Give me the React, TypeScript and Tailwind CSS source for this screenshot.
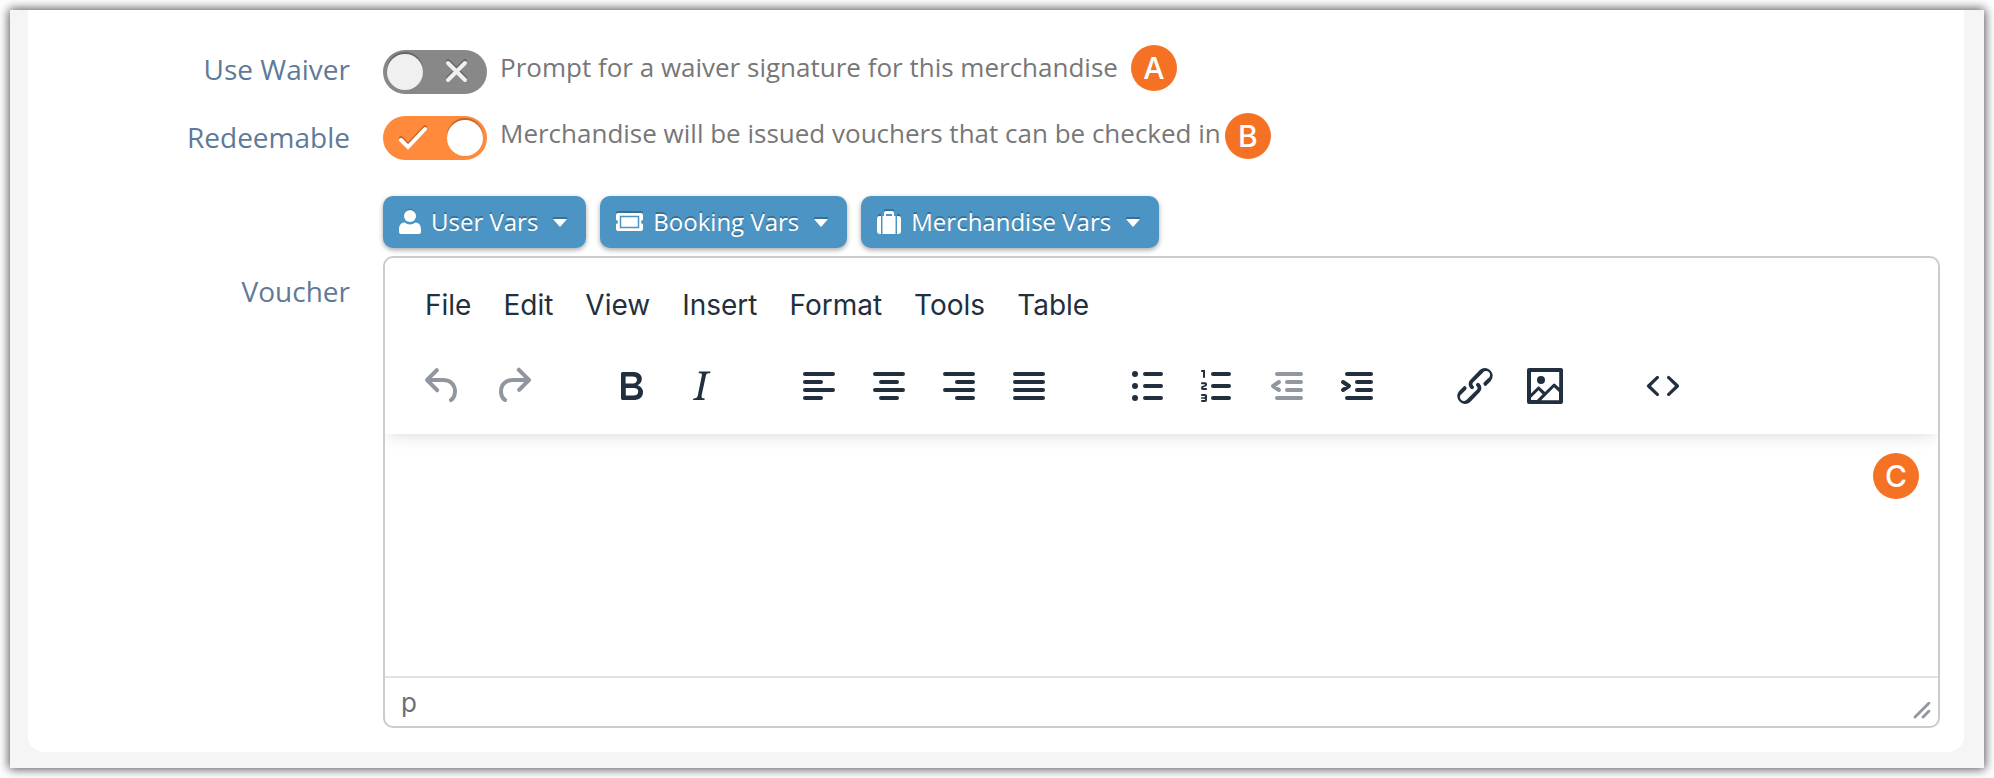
import { useState } from 'react';
import type { ReactNode } from 'react';

const MENUS = ['File', 'Edit', 'View', 'Insert', 'Format', 'Tools', 'Table'];

const UNDO = 'M6.4 8H12c3.7 0 6.2 2 6.8 5.1.6 2.7-.4 5.6-2.3 6.8a1 1 0 01-1-1.8c1.1-.6 1.8-2.7 1.4-4.6-.5-2.1-2.1-3.5-4.9-3.5H6.4l3.3 3.3a1 1 0 11-1.4 1.4l-5-5a1 1 0 010-1.4l5-5a1 1 0 011.4 1.4L6.4 8z';
const REDO = 'M17.6 10H12c-2.8 0-4.4 1.4-4.9 3.5-.4 2 .3 4 1.4 4.6a1 1 0 11-1 1.8c-2-1.2-2.9-4.1-2.3-6.8.6-3 3-5.1 6.8-5.1h5.6l-3.3-3.3a1 1 0 111.4-1.4l5 5a1 1 0 010 1.4l-5 5a1 1 0 01-1.4-1.4l3.3-3.3z';
const BOLD = 'M7.8 19c-.3 0-.5 0-.6-.2l-.2-.5V5.7c0-.2 0-.4.2-.5l.6-.2h5c1.5 0 2.7.3 3.5 1 .7.6 1.1 1.4 1.1 2.5a3 3 0 01-.6 1.9c-.4.6-1 1-1.6 1.2.4.1.9.3 1.3.6s.8.7 1 1.2c.4.4.5 1 .5 1.6 0 1.3-.4 2.3-1.3 3-.8.7-2.1 1-3.8 1H7.8zm5-8.3c.6 0 1.2-.1 1.6-.5.4-.3.6-.7.6-1.3 0-1.1-.8-1.7-2.3-1.7H9.3v3.5h3.4zm.5 6c.7 0 1.3-.1 1.7-.4.4-.4.6-.9.6-1.5s-.2-1-.7-1.4c-.4-.3-1-.4-2-.4H9.4v3.8h4z';
const ITALIC = 'M16.7 4.7l-.1.9h-.3c-.6 0-1 0-1.4.3-.3.3-.4.6-.5 1.1l-2.1 9.8v.6c0 .5.4.8 1.4.8h.2l-.2.8H8l.2-.8h.2c1.1 0 1.8-.5 2-1.5l2-9.8.1-.5c0-.6-.4-.8-1.4-.8h-.3l.2-.9h5.8z';
const DIGITS = 'M6 4v3.5c0 .3-.2.5-.5.5a.5.5 0 01-.5-.5V5h-.5a.5.5 0 010-1H6zm-1 8.8l.2.2h1.3c.3 0 .5.2.5.5s-.2.5-.5.5H4.9a1 1 0 01-.9-1V13c0-.4.3-.8.6-1l1.2-.4.2-.3a.2.2 0 00-.2-.2H4.5a.5.5 0 01-.5-.5c0-.3.2-.5.5-.5h1.6c.5 0 .9.4.9 1v.1c0 .4-.3.8-.6 1l-1.2.4-.2.3zM7 17v2c0 .6-.4 1-1 1H4.5a.5.5 0 010-1h1.2c.2 0 .3-.1.3-.3 0-.2-.1-.3-.3-.3H4.4a.4.4 0 110-.8h1.3c.2 0 .3-.1.3-.3 0-.2-.1-.3-.3-.3H4.5a.5.5 0 110-1H6c.6 0 1 .4 1 1z';
const LINK = 'M6.2 12.3a1 1 0 011.4 1.4l-2 2a2 2 0 102.6 2.8l4.8-4.8a1 1 0 000-1.4 1 1 0 111.4-1.3 2.9 2.9 0 010 4L9.6 20a3.9 3.9 0 01-5.5-5.5l2-2zm11.6-.6a1 1 0 01-1.4-1.4l2-2a2 2 0 10-2.6-2.8L11 10.3a1 1 0 000 1.4A1 1 0 119.6 13a2.9 2.9 0 010-4L14.4 4a3.9 3.9 0 015.5 5.5l-2 2z';
const IMAGE = 'M5 15.7l3.3-3.2c.3-.3.7-.3 1 0L12 15l4.1-4c.3-.4.8-.4 1 0l2 1.9V5H5v10.7zM5 18V19h3l2.8-2.9-2-2L5 17.9zm14-3l-2.5-2.4-6.4 6.5H19v-4zM4 3h16c.6 0 1 .4 1 1v16c0 .6-.4 1-1 1H4a1 1 0 01-1-1V4c0-.6.4-1 1-1zm6 8a2 2 0 100-4 2 2 0 000 4z';
const CODE = 'M9.8 15.7c.3.3.3.8 0 1-.3.4-.9.4-1.2 0l-4.4-4.1a.8.8 0 010-1.2l4.4-4.2c.3-.3.9-.3 1.2 0 .3.3.3.8 0 1.1L6 12l3.8 3.7zM14.2 15.7c-.3.3-.3.8 0 1 .4.4.9.4 1.2 0l4.4-4.1c.3-.3.3-.8 0-1.2l-4.4-4.2a.8.8 0 00-1.2 0c-.3.3-.3.8 0 1.1L18 12l-3.8 3.7z';

const fill = (d: string) => <path d={d} fill="currentColor" fillRule="evenodd" />;
const lines = (d: string) => <path d={d} stroke="currentColor" strokeWidth="2" strokeLinecap="round" strokeLinejoin="round" />;

type Tool = { label: string; icon: ReactNode; disabled?: boolean };

const TOOL_GROUPS: Tool[][] = [
  [
    { label: 'Undo', icon: fill(UNDO), disabled: true },
    { label: 'Redo', icon: fill(REDO), disabled: true },
  ],
  [
    { label: 'Bold', icon: fill(BOLD) },
    { label: 'Italic', icon: fill(ITALIC) },
  ],
  [
    { label: 'Align left', icon: lines('M5 6h14M5 10h8M5 14h14M5 18h8') },
    { label: 'Align center', icon: lines('M5 6h14M8 10h8M5 14h14M8 18h8') },
    { label: 'Align right', icon: lines('M5 6h14M11 10h8M5 14h14M11 18h8') },
    { label: 'Justify', icon: lines('M5 6h14M5 10h14M5 14h14M5 18h14') },
  ],
  [
    {
      label: 'Bullet list',
      icon: (
        <>
          {lines('M11 6h8M11 12h8M11 18h8')}
          <g fill="currentColor">
            <circle cx="6" cy="6" r="1.5" />
            <circle cx="6" cy="12" r="1.5" />
            <circle cx="6" cy="18" r="1.5" />
          </g>
        </>
      ),
    },
    { label: 'Numbered list', icon: <>{lines('M10 6h8M10 12h8M10 18h8')}{fill(DIGITS)}</> },
    { label: 'Decrease indent', icon: lines('M7 6h12M12 10h7M12 14h7M7 18h12M8 10l-3 2 3 2'), disabled: true },
    { label: 'Increase indent', icon: lines('M7 6h12M12 10h7M12 14h7M7 18h12M5 10l3 2-3 2') },
  ],
  [
    { label: 'Insert link', icon: fill(LINK) },
    { label: 'Insert image', icon: fill(IMAGE) },
  ],
  [{ label: 'Source code', icon: fill(CODE) }],
];

function Marker({ children, className = '' }: { children: string; className?: string }) {
  return (
    <span className={`flex size-[46px] shrink-0 items-center justify-center rounded-full bg-[#f57224] font-['Inter',sans-serif] text-[30px] leading-none font-medium text-white ${className}`}>
      {children}
    </span>
  );
}

function Toggle({ id, checked, onChange }: { id: string; checked: boolean; onChange: (v: boolean) => void }) {
  return (
    <span className={`relative flex h-11 w-[104px] shrink-0 items-center rounded-full px-1 ${checked ? 'bg-[#ff8a3c]' : 'bg-[#888888]'}`}>
      <input
        id={id}
        type="checkbox"
        checked={checked}
        onChange={(e) => onChange(e.target.checked)}
        className="absolute inset-0 size-full cursor-pointer opacity-0"
      />
      {checked ? (
        <svg viewBox="0 0 104 44" fill="none" className="pointer-events-none absolute inset-0 size-full" aria-hidden="true">
          <path d="M18 22l7 7 17-18" stroke="#000" strokeOpacity=".25" strokeWidth="4" strokeLinecap="round" />
          <path d="M18 24l7 7 17-18" stroke="#fff" strokeWidth="4" strokeLinecap="round" />
        </svg>
      ) : (
        <svg viewBox="0 0 104 44" fill="none" className="pointer-events-none absolute inset-0 size-full" aria-hidden="true">
          <path d="M65 11l17 17M82 11L65 28" stroke="#000" strokeOpacity=".25" strokeWidth="4" strokeLinecap="round" />
          <path d="M65 13l17 17M82 13L65 30" stroke="#f0f0f0" strokeWidth="4" strokeLinecap="round" />
        </svg>
      )}
      <span className={`pointer-events-none size-9 rounded-full shadow-[0_-2px_0_rgba(0,0,0,0.25)] ${checked ? 'ml-auto bg-white' : 'bg-[#f0f0f0]'}`} />
    </span>
  );
}

function VarsButton({ icon, children }: { icon: ReactNode; children: string }) {
  return (
    <button
      type="button"
      className="flex h-[52px] items-center rounded-[10px] bg-[#4c94c3] pr-[18px] pl-4 text-2xl text-white shadow-[0_2px_5px_rgba(0,0,0,0.35)] text-shadow-[0_-2px_0_rgba(0,0,0,0.25)]"
    >
      {icon}
      <span className="ml-2.5">{children}</span>
      <svg viewBox="0 0 16 12" className="ml-3.5 h-3 w-4" aria-hidden="true">
        <path d="M1 1h14v3H1z" fill="#000" fillOpacity=".25" />
        <path d="M1 3h14l-6 7a1.4 1.4 0 0 1-2 0z" fill="#fff" />
      </svg>
    </button>
  );
}

export default function App() {
  const [waiver, setWaiver] = useState(false);
  const [redeemable, setRedeemable] = useState(true);

  return (
    <div className="min-h-screen bg-white p-2.5 font-['Open_Sans',sans-serif]">
      <div className="bg-[#f5f5f5] pr-5 pb-4 pl-[18px] shadow-[0_0_10px_1px_rgba(0,0,0,0.7)]">
        <form className="grid grid-cols-[322px_minmax(0,1fr)] gap-x-[33px] rounded-b-2xl bg-white pt-10 pr-6 pb-6 text-[28px] text-[#5f7a99]">
          {/* Waiver */}
          <label htmlFor="waiver" className="text-right leading-[38px]">Use Waiver</label>
          <div className="flex h-[66px] items-start">
            <Toggle id="waiver" checked={waiver} onChange={setWaiver} />
            <span className="ml-[13px] text-[26px] leading-[34px] text-[#777777]">Prompt for a waiver signature for this merchandise</span>
            <Marker className="-mt-[5px] ml-[13px]">A</Marker>
          </div>

          {/* Redeemable */}
          <label htmlFor="redeemable" className="text-right leading-[42px]">Redeemable</label>
          <div className="flex h-20 items-start">
            <Toggle id="redeemable" checked={redeemable} onChange={setRedeemable} />
            <span className="ml-[13px] text-[26px] leading-[34px] text-[#777777]">Merchandise will be issued vouchers that can be checked in</span>
            <Marker className="-mt-[3px] ml-1">B</Marker>
          </div>

          <div className="col-start-2 flex gap-3.5 pb-2">
            <VarsButton
              icon={
                <svg viewBox="0 0 22 26" className="h-[26px] w-[22px]" fill="none" aria-hidden="true">
                  <circle cx="11" cy="5.5" r="5.5" fill="#000" fillOpacity=".25" />
                  <circle cx="11" cy="7" r="6" fill="#fff" />
                  <path d="M5.5 13.5c3.5 2.6 7.500 2.600 11 0 3.500 0 5.500 3 5.500 7V23a2 2 0 0 1-2 2H2a2 2 0 0 1-2-2v-2.500c0-4 2-7 5.500-7z" fill="#fff" />
                </svg>
              }
            >
              User Vars
            </VarsButton>
            <VarsButton
              icon={
                <svg viewBox="0 0 27 22" className="h-[22px] w-[27px]" fill="none" aria-hidden="true">
                  <path d="M2 0h23a2 2 0 0 1 2 2v2H0V2a2 2 0 0 1 2-2z" fill="#000" fillOpacity=".25" />
                  <path d="M2 2h23a2 2 0 0 1 2 2v5a2 2 0 0 0 0 4v5a2 2 0 0 1-2 2H2a2 2 0 0 1-2-2v-5a2 2 0 0 0 0-4V4a2 2 0 0 1 2-2z" fill="#fff" />
                  <path d="M4.500 5.500h18v11h-18z" stroke="#4c94c3" strokeWidth="1.500" />
                </svg>
              }
            >
              Booking Vars
            </VarsButton>
            <VarsButton
              icon={
                <svg viewBox="0 0 24 26" className="h-[26px] w-6" fill="#fff" aria-hidden="true">
                  <path d="M7 3V2a2 2 0 0 1 2-2h6a2 2 0 0 1 2 2v1zM2 5h2v2H0zM20 5h2l2 2h-4z" fill="#000" fillOpacity=".25" />
                  <path d="M3 7h1v18H3a3 3 0 0 1-3-3V10a3 3 0 0 1 3-3zM20 7h1a3 3 0 0 1 3 3v12a3 3 0 0 1-3 3h-1z" />
                  <path d="M5.500 25V7H7V4a2 2 0 0 1 2-2h6a2 2 0 0 1 2 2v3h1.500v18zM9 7h6V5H9z" fillRule="evenodd" />
                </svg>
              }
            >
              Merchandise Vars
            </VarsButton>
          </div>

          {/* Voucher editor */}
          <label htmlFor="voucher" className="col-start-1 pt-4 text-right leading-[38px]">Voucher</label>
          <div className="overflow-hidden rounded-[10px] border-2 border-[#cccccc] font-['Inter',sans-serif] text-[#222f3e]">
            <div className="relative shadow-[0_4px_16px_-4px_rgba(34,47,62,0.2)]">
              <div className="flex px-6 pt-5" role="menubar">
                {MENUS.map((m) => (
                  <button key={m} type="button" role="menuitem" className="px-4 text-[28px] leading-[54px]">
                    {m}
                  </button>
                ))}
              </div>
              <div className="flex flex-wrap pt-[30px] pb-6" role="toolbar">
                {TOOL_GROUPS.map((group, i) => (
                  <div key={i} className="flex px-6">
                    {group.map((t) => (
                      <button
                        key={t.label}
                        type="button"
                        aria-label={t.label}
                        disabled={t.disabled}
                        className="mr-0.5 flex h-12 w-[68px] items-center justify-center disabled:text-[#222f3e]/50"
                      >
                        <svg viewBox="0 0 24 24" className="size-12" fill="none" aria-hidden="true">{t.icon}</svg>
                      </button>
                    ))}
                  </div>
                ))}
              </div>
            </div>
            <div className="relative">
              <textarea id="voucher" className="block h-[242px] w-full resize-none p-8 text-[26px] outline-none" />
              <Marker className="absolute top-[19px] right-[19px]">C</Marker>
            </div>
            <div className="flex h-[50px] items-center justify-between border-t-2 border-[#e3e3e3] px-4 text-[26px] text-[#222f3e]/70">
              <span>p</span>
              <svg viewBox="0 0 10 10" className="-mr-2.5 mb-1.5 size-5 self-end" fill="#222f3e" fillOpacity=".5" aria-hidden="true">
                <path d="M8.1 1.1A.5.5 0 1 1 9 2l-7 7A.5.5 0 1 1 1 8l7-7ZM8.1 5.1A.5.5 0 1 1 9 6L6 9A.5.5 0 1 1 5 8l3-3Z" />
              </svg>
            </div>
          </div>
        </form>
      </div>
    </div>
  );
}
